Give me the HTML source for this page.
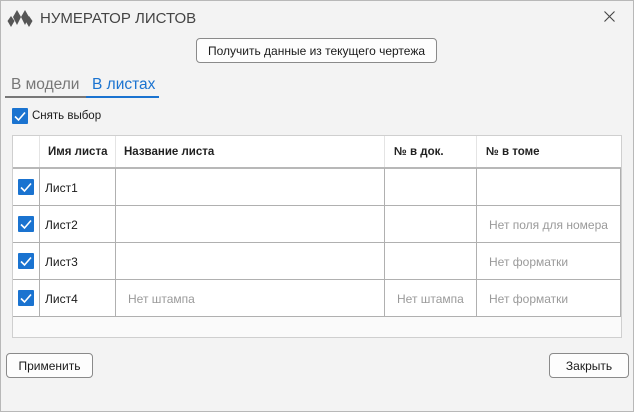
<!DOCTYPE html>
<html><head><meta charset="utf-8"><style>
*{box-sizing:border-box;margin:0;padding:0}
body{width:634px;height:412px;background:#f3f3f3;font-family:"Segoe UI","Liberation Sans",sans-serif;font-size:12px;color:#1a1a1a;position:relative;overflow:hidden}
.a{position:absolute}
.btn{position:absolute;background:#fdfdfd;border:1px solid #8a8a8a;border-radius:4px;text-align:center;font-size:12px;color:#1a1a1a}
.cb{position:absolute;width:16px;height:16px;background:#1a73d0;border-radius:1px}
.cb svg{position:absolute;left:0;top:0}
.vl{position:absolute;width:1px;background:#b0b0b0}
.hl{position:absolute;height:1px;background:#b0b0b0}
.t{position:absolute;font-size:12px}
.g{color:#9a9a9a}
.h{font-weight:bold;color:#222;font-size:11.5px}
</style></head><body>
<div class="a" style="left:0;top:0;width:634px;height:412px;border:1px solid #b8b8b8"></div>
<svg class="a" style="left:7px;top:9px" width="26" height="19" viewBox="0 0 26 19">
<path d="M4 7 L7.5 12 L4 18 L0.5 12 Z" fill="#555"/>
<path d="M10 1 L14 8 L10 16 L6 8 Z" fill="#555"/>
<path d="M18 1 L22 8 L18 16 L14 8 Z" fill="#555"/>
<path d="M22 7 L25.5 12 L22 18 L18.5 12 Z" fill="#555"/>
</svg>
<div class="a" style="left:40px;top:10px;font-size:15px;color:#444">НУМЕРАТОР ЛИСТОВ</div>
<svg class="a" style="left:604px;top:11px" width="11" height="11"><path d="M0.5 0.5L10.5 10.5M10.5 0.5L0.5 10.5" stroke="#444" stroke-width="1.1"/></svg>
<div class="btn" style="left:196px;top:38px;width:241px;height:25px;line-height:24px">Получить данные из текущего чертежа</div>
<div class="a" style="left:11px;top:76px;font-size:15.5px;color:#777">В модели</div>
<div class="a" style="left:92px;top:76px;font-size:15.5px;color:#1a73d0">В листах</div>
<div class="a" style="left:5px;top:96px;width:81px;height:2px;background:#777"></div>
<div class="a" style="left:86px;top:96px;width:73px;height:2px;background:#1a73d0"></div>
<div class="cb" style="left:12px;top:108px"><svg width="16" height="16"><path d="M3 8.5L6.5 12L13 4.5" stroke="#fff" stroke-width="1.6" fill="none"/></svg></div>
<div class="t" style="left:32px;top:110px;font-size:11.5px">Снять выбор</div>
<div class="a" style="left:12px;top:135px;width:610px;height:203px;background:#fafafa;border:1px solid #cfcfcf"></div>
<div class="a" style="left:13px;top:136px;width:608px;height:31px;background:#fff"></div>
<div class="a" style="left:13px;top:168px;width:608px;height:148px;background:#fff"></div>
<div class="hl" style="left:13px;top:167px;width:608px;height:2px;background:#b8b8b8"></div>
<div class="hl" style="left:13px;top:205px;width:608px"></div>
<div class="hl" style="left:13px;top:242px;width:608px"></div>
<div class="hl" style="left:13px;top:279px;width:608px"></div>
<div class="hl" style="left:13px;top:316px;width:608px"></div>
<div class="vl" style="left:39px;top:136px;height:31px;background:#e4e4e4"></div>
<div class="vl" style="left:115px;top:136px;height:31px;background:#e4e4e4"></div>
<div class="vl" style="left:384px;top:136px;height:31px;background:#e4e4e4"></div>
<div class="vl" style="left:476px;top:136px;height:31px;background:#e4e4e4"></div>
<div class="vl" style="left:39px;top:168px;height:148px"></div>
<div class="vl" style="left:115px;top:168px;height:148px"></div>
<div class="vl" style="left:384px;top:168px;height:148px"></div>
<div class="vl" style="left:476px;top:168px;height:148px"></div>
<div class="vl" style="left:620px;top:168px;height:148px"></div>
<div class="t h" style="left:48px;top:146px">Имя листа</div>
<div class="t h" style="left:124px;top:146px">Название листа</div>
<div class="t h" style="left:394px;top:146px">№ в док.</div>
<div class="t h" style="left:486px;top:146px">№ в томе</div>
<div class="cb" style="left:18px;top:179px"><svg width="16" height="16"><path d="M3 8.5L6.5 12L13 4.5" stroke="#fff" stroke-width="1.6" fill="none"/></svg></div>
<div class="cb" style="left:18px;top:216px"><svg width="16" height="16"><path d="M3 8.5L6.5 12L13 4.5" stroke="#fff" stroke-width="1.6" fill="none"/></svg></div>
<div class="cb" style="left:18px;top:253px"><svg width="16" height="16"><path d="M3 8.5L6.5 12L13 4.5" stroke="#fff" stroke-width="1.6" fill="none"/></svg></div>
<div class="cb" style="left:18px;top:290px"><svg width="16" height="16"><path d="M3 8.5L6.5 12L13 4.5" stroke="#fff" stroke-width="1.6" fill="none"/></svg></div>
<div class="t" style="left:45px;top:181px">Лист1</div>
<div class="t" style="left:45px;top:218px">Лист2</div>
<div class="t" style="left:45px;top:255px">Лист3</div>
<div class="t" style="left:45px;top:292px">Лист4</div>
<div class="t g" style="left:128px;top:292px">Нет штампа</div>
<div class="t g" style="left:397px;top:292px">Нет штампа</div>
<div class="t g" style="left:489px;top:218px">Нет поля для номера</div>
<div class="t g" style="left:489px;top:255px">Нет форматки</div>
<div class="t g" style="left:489px;top:292px">Нет форматки</div>
<div class="btn" style="left:6px;top:353px;width:87px;height:25px;line-height:24px">Применить</div>
<div class="btn" style="left:549px;top:353px;width:80px;height:25px;line-height:24px">Закрыть</div>
</body></html>
